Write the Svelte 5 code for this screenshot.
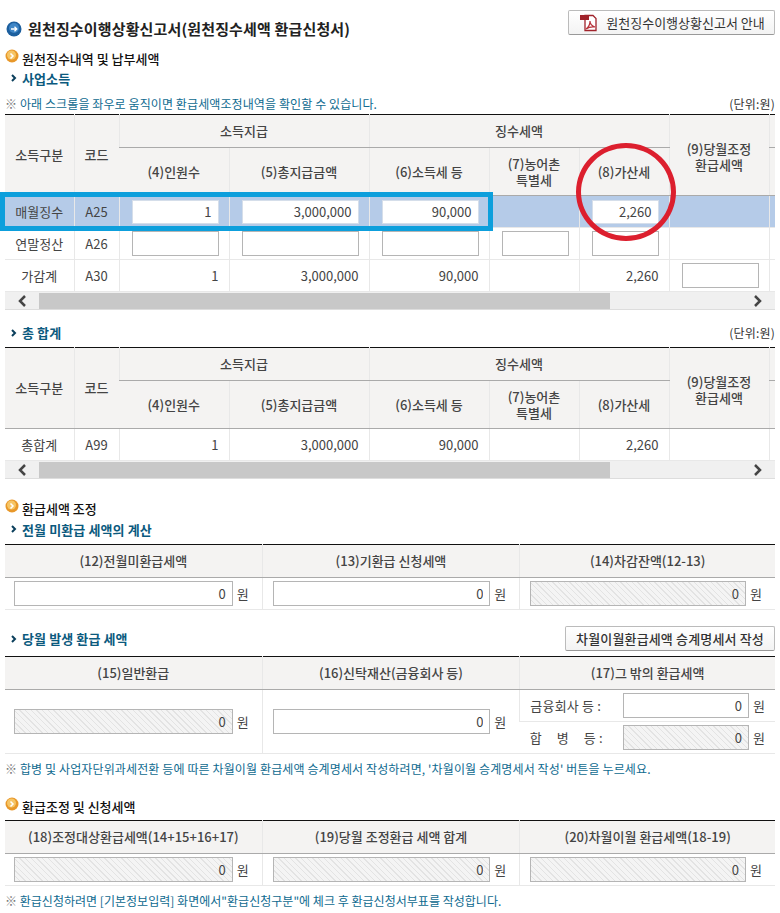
<script lang="ts">
  const detailRows = [
    { name: '매월징수', code: 'A25', active: true, cells: ['1', '3,000,000', '90,000', null, '2,260', null] },
    { name: '연말정산', code: 'A26', cells: ['', '', '', '', '', null] },
    { name: '가감계', code: 'A30', plain: true, cells: ['1', '3,000,000', '90,000', null, '2,260', ''] }
  ];
  const totalRows = [
    { name: '총합계', code: 'A99', plain: true, cells: ['1', '3,000,000', '90,000', null, '2,260', null] }
  ];
</script>

{#snippet icoSection()}
  <svg class="ico-sec" viewBox="0 0 14 14" width="14" height="14">
    <circle cx="7" cy="7" r="6.5" fill="#e8982a" />
    <circle cx="6.500" cy="6" r="4.500" fill="#f6c566" />
    <path d="M5.500 4.500 8 7l-2.500 2.500" fill="none" stroke="#fff" stroke-width="1.500" />
  </svg>
{/snippet}

{#snippet section(text)}
  <h3 class="section">{@render icoSection()}{text}</h3>
{/snippet}

{#snippet sub(text)}
  <h4 class="sub">
    <svg viewBox="0 0 6 8" width="6" height="8"><path d="M1 1l3 3-3 3" fill="none" stroke="#0b3f5c" stroke-width="2" /></svg>
    {text}
  </h4>
{/snippet}

{#snippet head()}
  <colgroup>
    <col class="c1" /><col class="c2" /><col class="c3" /><col class="c4" /><col class="c5" />
    <col class="c6" /><col class="c7" /><col class="c8" /><col class="c9" />
  </colgroup>
  <thead>
    <tr class="h1">
      <th rowspan="2">소득구분</th>
      <th rowspan="2">코드</th>
      <th colspan="2">소득지급</th>
      <th colspan="3">징수세액</th>
      <th rowspan="2" class="top">(9)당월조정<br />환급세액</th>
      <th></th>
    </tr>
    <tr class="h2">
      <th>(4)인원수</th>
      <th>(5)총지급금액</th>
      <th>(6)소득세 등</th>
      <th>(7)농어촌<br />특별세</th>
      <th>(8)가산세</th>
      <th></th>
    </tr>
  </thead>
{/snippet}

{#snippet rows(list)}
  <tbody>
    {#each list as row}
      <tr class:active={row.active}>
        <td class="ctr">{row.name}</td>
        <td class="ctr">{row.code}</td>
        {#each row.cells as cell}
          <td class="num">
            {#if cell !== null}
              {#if row.plain && cell !== ''}
                {cell}
              {:else}
                <input class="box" value={cell} readonly />
              {/if}
            {/if}
          </td>
        {/each}
        <td></td>
      </tr>
    {/each}
  </tbody>
{/snippet}

{#snippet scrollbar()}
  <div class="scrollbar">
    <svg class="arrow" viewBox="0 0 10 12" width="10" height="12"><path d="M8 1 3 6l5 5" fill="none" stroke="#444" stroke-width="2.500" /></svg>
    <div class="track"><div class="thumb"></div></div>
    <svg class="arrow" viewBox="0 0 10 12" width="10" height="12"><path d="M2 1l5 5-5 5" fill="none" stroke="#444" stroke-width="2.500" /></svg>
  </div>
{/snippet}

{#snippet amount(value, locked = false)}
  <div class="amount">
    <input class="box" class:locked value={value} readonly />
    <span>원</span>
  </div>
{/snippet}

<div class="page">
  <header class="title-row">
    <h2>
      <svg viewBox="0 0 16 16" width="16" height="16">
        <circle cx="8" cy="8" r="7.500" fill="#1c5f9e" />
        <circle cx="8" cy="7" r="5" fill="#3f86c6" />
        <path d="M5 8h6M8.500 5.800 10.800 8 8.500 10.200" fill="none" stroke="#fff" stroke-width="1.300" />
      </svg>
      원천징수이행상황신고서(원천징수세액 환급신청서)
    </h2>
    <button class="btn guide">
      <svg viewBox="0 0 18 18" width="18" height="18">
        <path d="M5 1.500h8l3 3v12H5z" fill="#fff" stroke="#a0232b" stroke-width="1.300" />
        <path d="M0 1h9v5H0z" fill="#a0232b" />
        <path d="M6 15c3-2 4-4 4-8 0 3 2 5 5 6-3-.5-6 0-9 2z" fill="none" stroke="#b8323a" stroke-width="1.200" />
      </svg>
      원천징수이행상황신고서 안내
    </button>
  </header>

  {@render section('원천징수내역 및 납부세액')}
  {@render sub('사업소득')}
  <div class="note-row">
    <p class="note"><span class="mark">※</span> 아래 스크롤을 좌우로 움직이면 환급세액조정내역을 확인할 수 있습니다.</p>
    <span class="unit">(단위:원)</span>
  </div>

  <div class="scroll-wrap">
    <table class="grid">
      {@render head()}
      {@render rows(detailRows)}
    </table>
    {@render scrollbar()}
    <div class="mark-blue"></div>
    <div class="mark-red"></div>
  </div>

  <div class="note-row second">
    {@render sub('총 합계')}
    <span class="unit">(단위:원)</span>
  </div>
  <table class="grid">
    {@render head()}
    {@render rows(totalRows)}
  </table>
  {@render scrollbar()}

  <div class="adjust">{@render section('환급세액 조정')}</div>
  <div class="calc">{@render sub('전월 미환급 세액의 계산')}</div>
  <table class="form">
    <thead>
      <tr>
        <th>(12)전월미환급세액</th>
        <th>(13)기환급 신청세액</th>
        <th>(14)차감잔액(12-13)</th>
      </tr>
    </thead>
    <tbody>
      <tr>
        <td>{@render amount('0')}</td>
        <td>{@render amount('0')}</td>
        <td>{@render amount('0', true)}</td>
      </tr>
    </tbody>
  </table>

  <div class="sub-row">
    {@render sub('당월 발생 환급 세액')}
    <button class="btn carry">차월이월환급세액 승계명세서 작성</button>
  </div>
  <table class="form">
    <thead>
      <tr>
        <th>(15)일반환급</th>
        <th>(16)신탁재산(금융회사 등)</th>
        <th>(17)그 밖의 환급세액</th>
      </tr>
    </thead>
    <tbody>
      <tr>
        <td rowspan="2">{@render amount('0', true)}</td>
        <td rowspan="2">{@render amount('0')}</td>
        <td>
          <div class="labeled">
            <span class="lab">금융회사 등 :</span>
            {@render amount('0')}
          </div>
        </td>
      </tr>
      <tr>
        <td>
          <div class="labeled">
            <span class="lab spread"><i>합</i><i>병</i><i>등 :</i></span>
            {@render amount('0', true)}
          </div>
        </td>
      </tr>
    </tbody>
  </table>
  <p class="note foot"><span class="mark">※</span> 합병 및 사업자단위과세전환 등에 따른 차월이월 환급세액 승계명세서 작성하려면, '차월이월 승계명세서 작성' 버튼을 누르세요.</p>

  <div class="apply">{@render section('환급조정 및 신청세액')}</div>
  <table class="form">
    <thead>
      <tr>
        <th>(18)조정대상환급세액(14+15+16+17)</th>
        <th>(19)당월 조정환급 세액 합계</th>
        <th>(20)차월이월 환급세액(18-19)</th>
      </tr>
    </thead>
    <tbody>
      <tr>
        <td>{@render amount('0', true)}</td>
        <td>{@render amount('0', true)}</td>
        <td>{@render amount('0', true)}</td>
      </tr>
    </tbody>
  </table>
  <p class="note foot last"><span class="mark">※</span> 환급신청하려면 [기본정보입력] 화면에서"환급신청구분"에 체크 후 환급신청서부표를 작성합니다.</p>
</div>

<style>
  :global(body) {
    background: #fff;
    font-family: "Noto Sans CJK KR", "Noto Sans", sans-serif;
    color: #444;
  }

  .page {
    width: 770px;
    padding: 0 5px;
    font-size: 13px;
    box-sizing: content-box;
    overflow: hidden;
    height: 913px;
  }

  .title-row {
    display: flex;
    justify-content: space-between;
    align-items: flex-start;
    height: 48px;
    padding-top: 10px;
    box-sizing: border-box;
  }

  h2 {
    display: flex;
    align-items: center;
    gap: 6px;
    margin: 10px 0 0 1px;
    font-size: 15px;
    line-height: 18px;
    letter-spacing: 0.15px;
    color: #222;
  }

  .btn {
    display: inline-flex;
    align-items: center;
    justify-content: center;
    font: inherit;
    color: #333;
    background: linear-gradient(#fff, #f3f3f3);
    border: 1px solid #bbb;
    border-bottom-color: #999;
    border-radius: 2px;
    padding: 0;
  }

  .guide {
    width: 207px;
    height: 25px;
    gap: 8px;
    padding-left: 2px;
  }

  .carry {
    width: 210px;
    height: 25px;
    font-weight: 500;
    letter-spacing: 0.15px;
  }

  .section {
    display: flex;
    align-items: center;
    gap: 3px;
    margin: 0;
    height: 20px;
    font-size: 13px;
    font-weight: 500;
    color: #111;
  }

  .ico-sec {
    margin-top: -4px;
    flex: none;
  }

  .sub {
    display: flex;
    align-items: center;
    gap: 5px;
    margin: 0;
    height: 20px;
    padding-left: 6px;
    font-size: 13px;
    font-weight: 700;
    letter-spacing: 0.1px;
    color: #0b5a7e;
  }

  .note-row {
    display: flex;
    justify-content: space-between;
    align-items: center;
    height: 26px;
    padding-top: 4px;
    box-sizing: border-box;
  }

  .note-row.second {
    height: 37px;
    padding-top: 8px;
  }

  .note {
    margin: 0;
    font-size: 12px;
    letter-spacing: 0.1px;
    color: #0e6a8f;
  }

  .mark {
    color: #777;
  }

  .unit {
    font-size: 12px;
    letter-spacing: 0.2px;
    color: #333;
  }

  .scroll-wrap {
    position: relative;
  }

  table {
    border-collapse: collapse;
    table-layout: fixed;
    width: 770px;
  }

  .grid {
    border-top: 1px solid #111;
  }

  .grid .c1 { width: 69px; }
  .grid .c2 { width: 45px; }
  .grid .c3 { width: 110px; }
  .grid .c4 { width: 140px; }
  .grid .c5 { width: 120px; }
  .grid .c6 { width: 90px; }
  .grid .c7 { width: 90px; }
  .grid .c8 { width: 100px; }
  .grid .c9 { width: 6px; }

  th {
    background: #f4f3f2;
    font-weight: 500;
    font-size: 13px;
    line-height: 16px;
    color: #444;
    border-left: 1px solid #e8e8e8;
    border-bottom: 1px solid #aaa;
    padding: 0;
  }

  th:first-child {
    border-left: 0;
  }

  .grid .h1 th {
    height: 32px;
  }

  .grid .h2 th {
    height: 47px;
  }

  .grid .top {
    vertical-align: top;
    padding-top: 26px;
  }

  .grid td {
    height: 32px;
    padding: 0;
    border-left: 1px solid #e8e8e8;
    border-bottom: 1px solid #e8e8e8;
    box-sizing: border-box;
  }

  .grid td:first-child {
    border-left: 0;
  }

  .ctr {
    text-align: center;
  }

  .num {
    text-align: right;
    padding-right: 10px !important;
  }

  .active td {
    background: #b5cbe8;
  }

  .box {
    width: 100%;
    height: 25px;
    box-sizing: border-box;
    border: 1px solid #b5b5b5;
    background: #fff;
    padding: 0 6px;
    text-align: right;
    font: inherit;
    color: #444;
    outline: none;
    display: block;
  }

  .grid .num .box {
    width: calc(100% - 12px);
    margin-left: 12px;
  }

  .active .box {
    border-color: #d5deea;
    height: 24px;
  }

  .locked {
    background: repeating-linear-gradient(45deg, #f4f4f4 0 3px, #e3e3e3 3px 4px);
    border-color: #b5b5b5;
  }

  .scrollbar {
    display: flex;
    align-items: center;
    height: 18px;
    background: #f0f0f0;
    border-bottom: 1px solid #ddd;
    box-sizing: border-box;
  }

  .arrow {
    flex: none;
    width: 34px;
  }

  .track {
    flex: 1;
    height: 16px;
  }

  .thumb {
    width: 571px;
    height: 100%;
    background: #c8c8c8;
  }

  .mark-blue {
    position: absolute;
    left: -5px;
    top: 78px;
    width: 483px;
    height: 29px;
    border: 5px solid #0d9fdc;
    pointer-events: none;
  }

  .mark-red {
    position: absolute;
    left: 571px;
    top: 29px;
    width: 90px;
    height: 88px;
    border: 5px solid #dc1f2e;
    border-radius: 50%;
    pointer-events: none;
  }

  .adjust {
    margin-top: 19px;
    margin-bottom: 1px;
  }

  .calc {
    padding-bottom: 5px;
  }

  .form {
    border-top: 1px solid #111;
  }

  .form th {
    height: 32px;
    width: 33.38%;
  }

  .form th:last-child {
    width: 33.12%;
  }

  .form td {
    height: 32px;
    padding: 0;
    border-left: 1px solid #e8e8e8;
    border-bottom: 1px solid #e8e8e8;
    box-sizing: border-box;
  }

  .form td:first-child {
    border-left: 0;
  }

  .amount {
    display: flex;
    align-items: center;
    gap: 4px;
    padding: 0 13px 0 10px;
    flex: 1;
    min-width: 0;
  }

  td:first-child > .amount {
    padding-left: 9px;
  }

  .amount .box {
    flex: 1;
    min-width: 0;
  }

  .labeled {
    display: flex;
    align-items: center;
    height: 31px;
    padding-left: 10px;
  }

  .labeled .amount {
    padding: 0 10px 0 0;
  }

  .lab {
    width: 93px;
    flex: none;
    letter-spacing: 0.2px;
  }

  .spread {
    display: flex;
    justify-content: space-between;
    padding-right: 20px;
    box-sizing: border-box;
  }

  .spread i {
    font-style: normal;
  }

  .sub-row {
    display: flex;
    justify-content: space-between;
    align-items: center;
    height: 46px;
    padding: 16px 0 5px;
    box-sizing: border-box;
  }

  .foot {
    height: 30px;
    line-height: 30px;
    white-space: nowrap;
    letter-spacing: 0.12px;
  }

  .apply {
    margin-top: 12px;
    margin-bottom: 4px;
  }

  .last {
    letter-spacing: 0.02px;
  }
</style>
